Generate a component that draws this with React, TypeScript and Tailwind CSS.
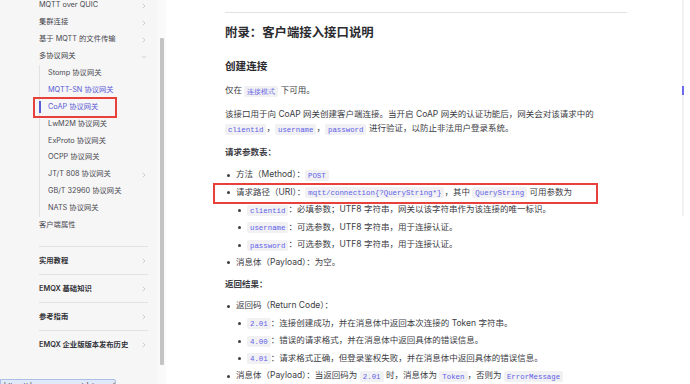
import React from 'react';
import { ChevronRight, ChevronDown } from 'lucide-react';

const codeCls =
  "rounded-[2px] bg-[#f1f1f4] px-[3px] py-[1.5px] font-['Liberation_Mono',monospace] text-[7.4px] text-[#5f5ee6]";

function Code({ children }: { children: React.ReactNode }) {
  return <span className={codeCls}>{children}</span>;
}

function Dot() {
  return (
    <span className="flex h-[17.5px] w-[11px] shrink-0 items-center pl-[2px]">
      <span className="h-[3px] w-[3px] rounded-full bg-[#3c3c43]" />
    </span>
  );
}

function Li({ children, sub }: { children: React.ReactNode; sub?: React.ReactNode }) {
  return (
    <li className="flex">
      <Dot />
      <div className="min-w-0 flex-1">
        <div className="h-[17.5px] leading-[17.5px] whitespace-nowrap">{children}</div>
        {sub && <ul>{sub}</ul>}
      </div>
    </li>
  );
}

const topItems = ['MQTT over QUIC', '集群连接', '基于 MQTT 的文件传输'];

const subItems: { label: string; tone?: 'brand' | 'active'; chevron?: boolean }[] = [
  { label: 'Stomp 协议网关' },
  { label: 'MQTT-SN 协议网关', tone: 'brand' },
  { label: 'CoAP 协议网关', tone: 'active' },
  { label: 'LwM2M 协议网关' },
  { label: 'ExProto 协议网关' },
  { label: 'OCPP 协议网关' },
  { label: 'JT/T 808 协议网关', chevron: true },
  { label: 'GB/T 32960 协议网关' },
  { label: 'NATS 协议网关' },
];

const sections = ['实用教程', 'EMQX 基础知识', '参考指南', 'EMQX 企业版版本发布历史'];

function Chevron() {
  return <ChevronRight size={8} strokeWidth={1.4} className="shrink-0 text-[#a0a0a6]" />;
}

function Sidebar() {
  return (
    <div className="flex h-full shrink-0">
      <nav className="h-full w-[157px] bg-[#f6f6f7] pl-[39px] pr-[9px] text-[7.3px] text-[#4a4a50]">
        <div className="-mt-[2.5px]">
          {topItems.map(t => (
            <div key={t} className="flex h-[16.9px] items-center justify-between">
              <span>{t}</span>
              <Chevron />
            </div>
          ))}
          <div className="flex h-[16.9px] items-center justify-between text-[#3c3c43]">
            <span>多协议网关</span>
            <ChevronDown size={8} strokeWidth={1.4} className="text-[#a0a0a6]" />
          </div>
          <div className="border-l border-[#e2e2e3] pl-[8px]">
            {subItems.map(s => (
              <div key={s.label} className="relative flex h-[16.9px] items-center justify-between">
                {s.tone === 'active' && (
                  <span className="absolute -left-[9px] top-[2.5px] h-[12px] w-[2px] bg-[#5b5bd6]" />
                )}
                <span className={s.tone ? 'text-[#5b5bd6]' : ''}>{s.label}</span>
                {s.chevron && <Chevron />}
              </div>
            ))}
          </div>
          <div className="flex h-[16.9px] items-center">客户端属性</div>
        </div>
        <div className="mt-[12.5px]">
          {sections.map(s => (
            <div
              key={s}
              className="flex h-[28px] items-center justify-between border-t border-[#e2e2e3] font-semibold text-[#333338]"
            >
              <span>{s}</span>
              <Chevron />
            </div>
          ))}
        </div>
      </nav>
      <div className="h-full w-[9px] bg-[#fafafa] pl-[3px] pt-[37.5px]">
        <div className="h-[327px] w-[4px] rounded-[1px] bg-[#c4c4c4]" />
      </div>
    </div>
  );
}

function Content() {
  return (
    <main className="ml-[59px] w-[402px] shrink-0 text-[8.5px] text-[#3c3c43]">
      <div className="mt-[12px] h-px bg-[#e2e2e3]" />
      <h2 className="mt-[11px] h-[18px] text-[12.4px] font-semibold leading-[18px] text-[#2c2c30]">
        附录：客户端接入接口说明
      </h2>
      <h3 className="mt-[18px] h-[14px] text-[10.6px] font-semibold leading-[14px] text-[#2c2c30]">创建连接</h3>
      <p className="mt-[9px] h-[14px] leading-[14px]">
        仅在 <Code>连接模式</Code> 下可用。
      </p>
      <div className="mt-[10px]">
        <p className="h-[14px] leading-[14px] whitespace-nowrap">
          该接口用于向 CoAP 网关创建客户端连接。当开启 CoAP 网关的认证功能后，网关会对该请求中的
        </p>
        <p className="h-[14px] leading-[14px] whitespace-nowrap">
          <Code>clientid</Code>，<Code>username</Code>，<Code>password</Code> 进行验证，以防止非法用户登录系统。
        </p>
      </div>
      <p className="mt-[10px] h-[14px] font-semibold leading-[14px]">请求参数表：</p>
      <ul className="mt-[7.25px]">
        <Li>
          方法（Method）：<Code>POST</Code>
        </Li>
        <Li
          sub={
            <>
              <Li>
                <Code>clientid</Code>：必填参数；UTF8 字符串，网关以该字符串作为该连接的唯一标识。
              </Li>
              <Li>
                <Code>username</Code>：可选参数，UTF8 字符串，用于连接认证。
              </Li>
              <Li>
                <Code>password</Code>：可选参数，UTF8 字符串，用于连接认证。
              </Li>
            </>
          }
        >
          请求路径（URI）：<Code>mqtt/connection{'{'}?QueryString*{'}'}</Code>，其中 <Code>QueryString</Code> 可用参数为
        </Li>
        <Li>消息体（Payload）：为空。</Li>
      </ul>
      <p className="mt-[5.75px] h-[14px] font-semibold leading-[14px]">返回结果：</p>
      <ul className="mt-[6.25px]">
        <Li
          sub={
            <>
              <Li>
                <Code>2.01</Code>：连接创建成功，并在消息体中返回本次连接的 Token 字符串。
              </Li>
              <Li>
                <Code>4.00</Code>：错误的请求格式，并在消息体中返回具体的错误信息。
              </Li>
              <Li>
                <Code>4.01</Code>：请求格式正确，但登录鉴权失败，并在消息体中返回具体的错误信息。
              </Li>
            </>
          }
        >
          返回码（Return Code）：
        </Li>
        <Li>
          消息体（Payload）：当返回码为 <Code>2.01</Code> 时，消息体为 <Code>Token</Code>，否则为{' '}
          <Code>ErrorMessage</Code>
        </Li>
      </ul>
    </main>
  );
}

export default function App() {
  return (
    <div className="relative flex h-[384px] w-[690px] overflow-hidden bg-white font-['Inter','Noto_Sans_CJK_SC',sans-serif]">
      <Sidebar />
      <Content />
      <aside className="ml-[55px] h-[216px] w-[2px] shrink-0 bg-[#f1f1f2]">
        <div className="mt-[86px] h-[9px] w-[2px] bg-[#6b6bf0]" />
      </aside>

      {/* annotation boxes */}
      <div className="absolute left-[33px] top-[97px] h-[21px] w-[84px] border-2 border-[#e8403a]" />
      <div className="absolute left-[213px] top-[183px] h-[21px] w-[385px] border-2 border-[#e8403a]" />

      {/* browser link preview */}
      <div className="absolute left-0 top-[379px] h-[16px] w-[116px] overflow-hidden rounded-tr-[2px] border border-[#a9bfe6] bg-[#dfe9fa] px-[3px] pt-[1px] text-[7px] leading-[10px] whitespace-nowrap text-[#333]">
        https://docs.emqx.com/zh/emqx/latest/gateway/coap.html
      </div>
    </div>
  );
}
